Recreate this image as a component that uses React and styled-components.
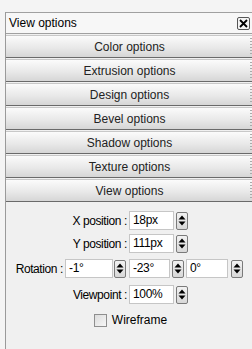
import React from "react";
import styled, { createGlobalStyle } from "styled-components";

const Global = createGlobalStyle`
  body {
    margin: 0;
    background: #f4f4f4;
    font-family: "Liberation Sans", sans-serif;
    font-size: 12px;
    color: #000;
  }
`;

const Panel = styled.div`
  width: 247px;
  height: 337px;
  margin: 12px 0 0 5px;
  display: flex;
  flex-direction: column;
  border-left: 1px solid #9a9a9a;
  background: #f0f0f0;
`;

const TitleBar = styled.div`
  height: 20px;
  display: flex;
  align-items: center;
  justify-content: space-between;
  padding: 0 3px 0 3px;
  border-top: 1px solid #a0a0a0;
  border-bottom: 1px solid #a0a0a0;
  background: #f7f7f7;
  font-size: 12px;
`;

const Close = styled.div`
  width: 11px;
  height: 11px;
  border: 1px solid #555;
  border-radius: 2px;
  display: flex;
  align-items: center;
  justify-content: center;
  background: #f4f4f4;
`;

const Tab = styled.div`
  height: 21px;
  margin-top: 1px;
  display: flex;
  align-items: center;
  justify-content: center;
  position: relative;
  border-top: 1px solid #c8c8c8;
  border-bottom: 1px solid #6a6a6a;
  background: linear-gradient(#fbfbfb, #e9e9e9 55%, #d6d6d6);
  font-size: 12px;
  color: #222;
  &::after {
    content: "";
    position: absolute;
    right: 1px;
    top: 2px;
    bottom: 2px;
    width: 2px;
    background: repeating-linear-gradient(#aaa 0 1px, transparent 1px 3px);
  }
`;

const Body = styled.div`
  flex: 1;
  display: flex;
  flex-direction: column;
  padding-top: 7px;
  font-size: 12px;
`;

const Row = styled.div`
  display: flex;
  align-items: center;
  height: 23px;
  margin-top: ${(p) => p.$top || 0}px;
`;

const Label = styled.span`
  width: ${(p) => p.$w}px;
  text-align: right;
  padding-right: 2px;
  box-sizing: border-box;
  letter-spacing: -0.4px;
`;

const Input = styled.div`
  width: ${(p) => p.$w}px;
  height: 19px;
  box-sizing: border-box;
  border: 1px solid #c6c6c6;
  background: #fff;
  padding-left: 3px;
  line-height: 17px;
  letter-spacing: -0.3px;
`;

const SpinBox = styled.div`
  width: 10px;
  height: 16px;
  margin: 0 ${(p) => p.$right || 0}px 0 ${(p) => p.$left || 2}px;
  border: 1px solid #7a7a7a;
  border-radius: 2px;
  background: linear-gradient(#f2f2f2, #d8d8d8);
  display: flex;
  align-items: center;
  justify-content: center;
`;

const Check = styled.div`
  width: 11px;
  height: 11px;
  border: 1px solid #8e8e8e;
  background: linear-gradient(135deg, #dcdcdc, #f6f6f6);
  margin-right: 5px;
`;

const CheckRow = styled.div`
  display: flex;
  align-items: center;
  justify-content: center;
  height: 20px;
  margin-left: 2px;
  margin-top: 4px;
`;

const Spin = ({ left, right }) => (
  <SpinBox $left={left} $right={right}>
    <svg width="8" height="13" viewBox="0 0 8 13">
      <path d="M4 1.5 L7.5 5.5 L0.5 5.5 Z M0.5 7.5 L7.5 7.5 L4 11.5 Z" fill="#000" />
    </svg>
  </SpinBox>
);

const tabs = [
  "Color options",
  "Extrusion options",
  "Design options",
  "Bevel options",
  "Shadow options",
  "Texture options",
  "View options",
];

export default function App() {
  return (
    <>
      <Global />
      <Panel>
        <TitleBar>
          <span>View options</span>
          <Close>
            <svg width="9" height="9" viewBox="0 0 9 9">
              <path d="M1 1 L8 8 M8 1 L1 8" stroke="#000" strokeWidth="1.8" />
            </svg>
          </Close>
        </TitleBar>
        {tabs.map((t) => (
          <Tab key={t}>{t}</Tab>
        ))}
        <Body>
          <Row>
            <Label $w={123}>X position :</Label>
            <Input $w={45}>18px</Input>
            <Spin left={2} />
          </Row>
          <Row>
            <Label $w={123}>Y position :</Label>
            <Input $w={45}>111px</Input>
            <Spin left={2} />
          </Row>
          <Row $top={2}>
            <Label $w={59}>Rotation :</Label>
            <Input $w={48}>-1°</Input>
            <Spin left={1} right={3} />
            <Input $w={41}>-23°</Input>
            <Spin left={2} right={2} />
            <Input $w={42}>0°</Input>
            <Spin left={3} />
          </Row>
          <Row $top={3}>
            <Label $w={123}>Viewpoint :</Label>
            <Input $w={45}>100%</Input>
            <Spin left={2} />
          </Row>
          <CheckRow>
            <Check />
            <span>Wireframe</span>
          </CheckRow>
        </Body>
      </Panel>
    </>
  );
}
